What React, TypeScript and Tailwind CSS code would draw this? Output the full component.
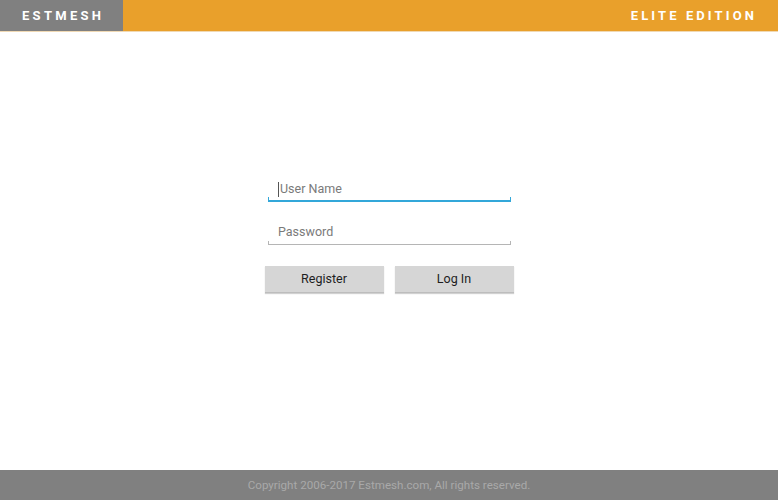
import React from 'react';

const Field: React.FC<{ label: string; active?: boolean }> = ({ label, active }) => {
  const line = active ? 'bg-[#33a7d9]' : 'bg-[#b5b5b5]';
  return (
    <div className="relative w-[243px] h-[25px]">
      <div className="flex items-center h-[22px] pl-[10px] text-[12.5px] text-[#7a7a7a]">
        {active && <span className="w-px h-[15px] bg-[#555] mr-[1px]" />}
        <span>{label}</span>
      </div>
      <div className={`absolute left-0 right-0 ${active ? 'bottom-[1px] h-[2px]' : 'bottom-[1px] h-px'} ${line}`} />
      <div className={`absolute left-0 bottom-[1px] w-px ${active ? 'h-[5px] w-[2px]' : 'h-[4px]'} ${line}`} />
      <div className={`absolute right-0 bottom-[1px] w-px ${active ? 'h-[5px] w-[2px]' : 'h-[4px]'} ${line}`} />
    </div>
  );
};

const Btn: React.FC<{ label: string }> = ({ label }) => (
  <button className="w-[119px] h-[27px] pt-[1px] bg-[#d6d6d6] border-b border-[#bdbdbd] shadow-[0_1px_1px_rgba(0,0,0,0.18)] text-[12.5px] text-[#1e1e1e]">
    {label}
  </button>
);

export default function App() {
  return (
    <div className="w-[778px] h-[500px] flex flex-col bg-white font-['Roboto',_'Liberation_Sans',_sans-serif]">
      <header className="flex h-8 border-b border-[#f0d9b4]">
        <div className="w-[123px] bg-[#808080] flex items-center pl-[22px] text-white font-bold text-[13px] tracking-[3.3px]">
          ESTMESH
        </div>
        <div className="flex-1 bg-[#e9a02b] flex items-center justify-end pr-[21px] text-white font-bold text-[13px] tracking-[3.1px]">
          ELITE EDITION
        </div>
      </header>

      <main className="flex-1 flex flex-col items-center pt-[146px]">
        <div className="flex flex-col gap-[18px] ml-[1px]">
          <Field label="User Name" active />
          <Field label="Password" />
        </div>
        <div className="flex gap-[11px] mt-[20px]">
          <Btn label="Register" />
          <Btn label="Log In" />
        </div>
      </main>

      <footer className="h-[30px] pt-[2px] bg-[#808080] flex items-center justify-center text-[11.6px] text-[#a9a9a9]">
        Copyright 2006-2017 Estmesh.com, All rights reserved.
      </footer>
    </div>
  );
}
